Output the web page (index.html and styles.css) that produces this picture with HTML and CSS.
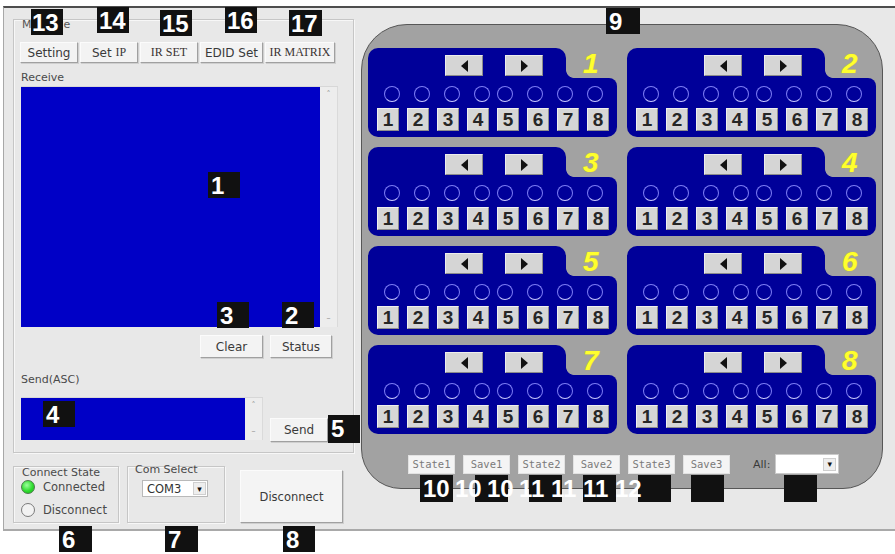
FILE: index.html
```html
<!DOCTYPE html>
<html>
<head>
<meta charset="utf-8">
<title>Matrix Control</title>
<link rel="stylesheet" href="styles.css">
</head>
<body>
<div class="window">
  <div class="left">
    <div class="group msg">
      <div class="legend">Message</div>
      <div class="tabs">
        <div class="btn w58">Setting</div>
        <div class="btn w58"><span>Set&nbsp;</span><span class="serif">IP</span></div>
        <div class="btn w58 serif">IR SET</div>
        <div class="btn w63">EDID Set</div>
        <div class="btn w70 serif">IR MATRIX</div>
      </div>
      <div class="lbl">Receive</div>
      <div class="textbox receive">
        <div class="blue"></div>
        <div class="sb"><span>&#x02C4;</span><span>&#x2013;</span></div>
      </div>
      <div class="row-cs">
        <div class="btn w63 h23">Clear</div>
        <div class="btn w62 h23">Status</div>
      </div>
      <div class="lbl lbl-send">Send(ASC)</div>
      <div class="send-row">
        <div class="textbox send">
          <div class="blue"></div>
          <div class="sb"><span>&#x02C4;</span><span>&#x2013;</span></div>
        </div>
        <div class="btn send-btn">Send</div>
      </div>
    </div>
    <div class="bottom">
      <div class="group cstate">
        <div class="glabel">Connect State</div>
        <div class="radio r1"><i class="dot on"></i><span>Connected</span></div>
        <div class="radio r2"><i class="dot"></i><span>Disconnect</span></div>
      </div>
      <div class="group com">
        <div class="glabel">Com Select</div>
        <div class="combo"><span class="val">COM3</span><span class="dd">&#x25BE;</span></div>
      </div>
      <div class="btn disc">Disconnect</div>
    </div>
  </div>

  <div class="panel">
    <div class="cards">
      <div class="card"><div class="ctop"><div class="tab"><div class="arrow"><i class="tri-l"></i></div><div class="arrow"><i class="tri-r"></i></div></div><div class="num">1</div></div><div class="cbody"><div class="leds"><i></i><i></i><i></i><i></i><i></i><i></i><i></i><i></i></div><div class="keys"><b>1</b><b>2</b><b>3</b><b>4</b><b>5</b><b>6</b><b>7</b><b>8</b></div></div></div>
      <div class="card"><div class="ctop"><div class="tab"><div class="arrow"><i class="tri-l"></i></div><div class="arrow"><i class="tri-r"></i></div></div><div class="num">2</div></div><div class="cbody"><div class="leds"><i></i><i></i><i></i><i></i><i></i><i></i><i></i><i></i></div><div class="keys"><b>1</b><b>2</b><b>3</b><b>4</b><b>5</b><b>6</b><b>7</b><b>8</b></div></div></div>
      <div class="card"><div class="ctop"><div class="tab"><div class="arrow"><i class="tri-l"></i></div><div class="arrow"><i class="tri-r"></i></div></div><div class="num">3</div></div><div class="cbody"><div class="leds"><i></i><i></i><i></i><i></i><i></i><i></i><i></i><i></i></div><div class="keys"><b>1</b><b>2</b><b>3</b><b>4</b><b>5</b><b>6</b><b>7</b><b>8</b></div></div></div>
      <div class="card"><div class="ctop"><div class="tab"><div class="arrow"><i class="tri-l"></i></div><div class="arrow"><i class="tri-r"></i></div></div><div class="num">4</div></div><div class="cbody"><div class="leds"><i></i><i></i><i></i><i></i><i></i><i></i><i></i><i></i></div><div class="keys"><b>1</b><b>2</b><b>3</b><b>4</b><b>5</b><b>6</b><b>7</b><b>8</b></div></div></div>
      <div class="card"><div class="ctop"><div class="tab"><div class="arrow"><i class="tri-l"></i></div><div class="arrow"><i class="tri-r"></i></div></div><div class="num">5</div></div><div class="cbody"><div class="leds"><i></i><i></i><i></i><i></i><i></i><i></i><i></i><i></i></div><div class="keys"><b>1</b><b>2</b><b>3</b><b>4</b><b>5</b><b>6</b><b>7</b><b>8</b></div></div></div>
      <div class="card"><div class="ctop"><div class="tab"><div class="arrow"><i class="tri-l"></i></div><div class="arrow"><i class="tri-r"></i></div></div><div class="num">6</div></div><div class="cbody"><div class="leds"><i></i><i></i><i></i><i></i><i></i><i></i><i></i><i></i></div><div class="keys"><b>1</b><b>2</b><b>3</b><b>4</b><b>5</b><b>6</b><b>7</b><b>8</b></div></div></div>
      <div class="card"><div class="ctop"><div class="tab"><div class="arrow"><i class="tri-l"></i></div><div class="arrow"><i class="tri-r"></i></div></div><div class="num">7</div></div><div class="cbody"><div class="leds"><i></i><i></i><i></i><i></i><i></i><i></i><i></i><i></i></div><div class="keys"><b>1</b><b>2</b><b>3</b><b>4</b><b>5</b><b>6</b><b>7</b><b>8</b></div></div></div>
      <div class="card"><div class="ctop"><div class="tab"><div class="arrow"><i class="tri-l"></i></div><div class="arrow"><i class="tri-r"></i></div></div><div class="num">8</div></div><div class="cbody"><div class="leds"><i></i><i></i><i></i><i></i><i></i><i></i><i></i><i></i></div><div class="keys"><b>1</b><b>2</b><b>3</b><b>4</b><b>5</b><b>6</b><b>7</b><b>8</b></div></div></div>
    </div>
    <div class="states">
      <div class="sbtn">State1</div>
      <div class="sbtn">Save1</div>
      <div class="sbtn">State2</div>
      <div class="sbtn">Save2</div>
      <div class="sbtn">State3</div>
      <div class="sbtn">Save3</div>
      <span class="all">All:</span>
      <div class="alldd"><span class="dd">&#x25BE;</span></div>
    </div>
  </div>
</div>

<div class="tag t13">13</div>
<div class="tag t14">14</div>
<div class="tag t15">15</div>
<div class="tag t16">16</div>
<div class="tag t17">17</div>
<div class="tag t9">9</div>
<div class="tag t1">1</div>
<div class="tag t3">3</div>
<div class="tag t2">2</div>
<div class="tag t4">4</div>
<div class="tag t5">5</div>
<div class="tag t6">6</div>
<div class="tag t7">7</div>
<div class="tag t8">8</div>
<div class="tag b1"></div>
<div class="tag b2"></div>
<div class="tag b3"></div>
<div class="tag b4"></div>
<div class="tag b5"></div>
<div class="tag b6"></div>
<div class="tag b7"></div>
<div class="wlabels"><span>10</span><span>10</span><span>10</span><span>11</span><span>11</span><span>11</span><span>12</span></div>
</body>
</html>
```

FILE: styles.css
```css
* { box-sizing: border-box; }

body {
  margin: 0;
  width: 895px;
  height: 554px;
  overflow: hidden;
  position: relative;
  background: #ffffff;
  font-family: "DejaVu Sans", "Liberation Sans", sans-serif;
  color: #3c3c3c;
}

.window {
  margin: 6px 0 0 3px;
  height: 525px;
  border-top: 2px solid #4d4d4d;
  border-left: 1px solid #a8a8a8;
  border-bottom: 2px solid #a9a9a9;
  background: #e8e8e8;
  display: flex;
  align-items: flex-start;
  padding-left: 9px;
}

.left {
  width: 341px;
  display: flex;
  flex-direction: column;
}

.group {
  border: 1px solid #c6c6c6;
  box-shadow: inset 1px 1px 0 #f7f7f7, 1px 1px 0 #f7f7f7;
}

.msg {
  margin-top: 11px;
  height: 434px;
  display: flex;
  flex-direction: column;
}

.legend {
  font-size: 11px;
  line-height: 12px;
  margin-top: -1px;
  padding-left: 8px;
  color: #555;
}

.serif { font-family: "Liberation Serif", serif; }

.btn {
  display: flex;
  align-items: center;
  justify-content: center;
  background: #f3f3f3;
  border: 1px solid;
  border-color: #fbfbfb #a0a0a0 #a0a0a0 #fbfbfb;
  box-shadow: 1px 1px 0 #cfcfcf;
  font-size: 12px;
  color: #3a3a3a;
  white-space: nowrap;
}

.tabs {
  display: flex;
  gap: 2px;
  margin-top: 11px;
  padding-left: 6px;
  height: 21px;
}
.tabs .btn { height: 21px; }
.tabs .btn.serif { font-size: 12px; color: #3a3232; }
.w58 { width: 58px; }
.w62 { width: 62px; }
.w63 { width: 63px; }
.w70 { width: 70px; }
.h23 { height: 23px; }

.lbl {
  font-size: 11px;
  line-height: 12px;
  margin-top: 9px;
  padding-left: 7px;
  color: #4a4a4a;
}
.lbl-send { margin-top: 16px; }

.textbox {
  display: flex;
  margin-left: 7px;
  border-top: 1px solid #d7d7d7;
}
.textbox .blue { flex: 1; background: #0000c6; }
.textbox .sb {
  width: 18px;
  background: #ededed;
  border-right: 1px solid #dadada;
  display: flex;
  flex-direction: column;
  justify-content: space-between;
  align-items: center;
  font-size: 8px;
  line-height: 10px;
  color: #9a9a9a;
  padding: 3px 0;
}
.receive { margin-top: 2px; height: 241px; width: 317px; }

.row-cs {
  display: flex;
  gap: 7px;
  margin-top: 8px;
  padding-left: 186px;
}

.send-row {
  display: flex;
  margin-top: 11px;
}
.send { height: 43px; width: 242px; }
.send-btn {
  width: 58px;
  height: 24px;
  margin: 21px 0 0 7px;
}

.bottom {
  display: flex;
  align-items: flex-start;
  margin-top: 13px;
}

.glabel {
  font-size: 11px;
  line-height: 12px;
  padding-left: 8px;
  color: #4a4a4a;
}

.cstate { width: 106px; height: 57px; }
.com { width: 98px; height: 57px; margin-left: 8px; }
.com .glabel { padding-left: 7px; margin-top: -3px; }

.radio {
  display: flex;
  align-items: center;
  gap: 8px;
  height: 16px;
  padding-left: 7px;
  font-size: 11.5px;
  color: #4a4a4a;
}
.r2 { margin-top: 7px; }
.dot {
  width: 14px;
  height: 14px;
  border-radius: 50%;
  border: 1px solid #7a7a7a;
  background: #f2f2f2;
}
.dot.on {
  border-color: #4a7a4a;
  background: radial-gradient(circle at 40% 35%, #9dff9d 0, #2fdc2f 55%, #19b419 100%);
}

.combo {
  display: flex;
  align-items: center;
  width: 66px;
  height: 17px;
  margin: 4px 0 0 14px;
  background: #ffffff;
  border: 1px solid #b9b9b9;
  font-size: 11.5px;
  color: #333;
}
.combo .val { flex: 1; padding-left: 4px; }
.dd {
  width: 13px;
  height: 13px;
  margin-right: 1px;
  background: #eeeeee;
  border: 1px solid #cfcfcf;
  display: flex;
  align-items: center;
  justify-content: center;
  font-size: 9px;
  color: #111;
}

.disc {
  width: 103px;
  height: 53px;
  margin: 4px 0 0 15px;
  font-size: 11.5px;
  background: #f4f4f4;
}

/* right panel */
.panel {
  margin: 16px 0 0 7px;
  width: 522px;
  height: 465px;
  border: 1px solid #575757;
  border-radius: 46px 46px 40px 40px;
  background: #a2a2a2;
  padding: 23px 6px 0;
}

.cards {
  display: grid;
  grid-template-columns: 249px 249px;
  grid-auto-rows: 89px;
  gap: 10px;
}

.card {
  display: flex;
  flex-direction: column;
}
.ctop { display: flex; height: 30px; }
.tab {
  width: 198px;
  background: #000099;
  border-radius: 10px 10px 0 0;
  display: flex;
  gap: 22px;
  padding: 7px 0 0 77px;
}
.arrow {
  width: 38px;
  height: 21px;
  background: #d5d5d5;
  border: 1px solid;
  border-color: #ececec #8c8c8c #8c8c8c #ececec;
  display: flex;
  align-items: center;
  justify-content: center;
}
.tri-l, .tri-r {
  width: 0;
  height: 0;
  border-top: 6px solid transparent;
  border-bottom: 6px solid transparent;
}
.tri-l { border-right: 7px solid #111; }
.tri-r { border-left: 7px solid #111; }

.num {
  flex: 1;
  position: relative;
  padding-left: 17px;
  font-family: "Liberation Sans", Arial, sans-serif;
  font-weight: bold;
  font-style: italic;
  font-size: 28px;
  line-height: 31px;
  color: #ffff2e;
  text-shadow: 0 0 1px #cccc00;
}
.num::after {
  content: "";
  position: absolute;
  left: 0;
  bottom: 0;
  width: 8px;
  height: 8px;
  background: radial-gradient(circle at 100% 0, transparent 7.5px, #000099 8.2px);
}

.cbody {
  flex: 1;
  background: #000099;
  border-radius: 0 8px 10px 10px;
  padding-top: 8px;
}
.leds {
  display: flex;
  gap: 14px;
  padding-left: 16px;
  height: 16px;
}
.leds i {
  width: 16px;
  height: 16px;
  border-radius: 50%;
  border: 1px solid;
  border-color: #7d7df5 #7d7df5 #c9c9ff #7d7df5;
}
.leds i:nth-child(5) { margin-left: -7px; }

.keys {
  display: flex;
  gap: 8px;
  padding-left: 9px;
  margin-top: 6px;
}
.keys b {
  width: 22px;
  height: 23px;
  background: #d6d6d6;
  border: 1px solid;
  border-color: #efefef #8e8e8e #8e8e8e #efefef;
  display: flex;
  align-items: center;
  justify-content: center;
  font-family: "Liberation Sans", Arial, sans-serif;
  font-size: 19px;
  font-weight: bold;
  color: #262626;
  line-height: 1;
}

.states {
  display: flex;
  align-items: center;
  gap: 8px;
  margin: 20px 0 0 40px;
}
.sbtn {
  width: 47px;
  height: 19px;
  background: #f4f4f4;
  border: 1px solid #e2e2e2;
  display: flex;
  align-items: center;
  justify-content: center;
  font-family: "DejaVu Sans Mono", monospace;
  font-size: 10.5px;
  color: #7a7a7a;
}
.all {
  margin-left: 15px;
  font-size: 11px;
  color: #3a3a3a;
}
.alldd {
  margin-left: -3px;
  width: 64px;
  height: 20px;
  background: #ffffff;
  border: 1px solid #cacaca;
  display: flex;
  align-items: center;
  justify-content: flex-end;
}
.alldd .dd { margin-right: 2px; }

/* annotation tags laid over the screenshot */
.tag {
  position: absolute;
  width: 32px;
  height: 26px;
  background: #111111;
  color: #ffffff;
  font-family: "Liberation Sans", Arial, sans-serif;
  font-weight: bold;
  font-size: 24px;
  line-height: 27px;
  padding-left: 3px;
}
.t13 { left: 31px; top: 9px; padding-left: 1px; }
.t14 { left: 97px; top: 7px; padding-left: 2px; }
.t15 { left: 160px; top: 10px; padding-left: 2px; }
.t16 { left: 225px; top: 7px; padding-left: 2px; }
.t17 { left: 289px; top: 10px; padding-left: 2px; width: 33px; }
.t9 { left: 606px; top: 8px; width: 34px; }
.t1 { left: 208px; top: 172px; }
.t3 { left: 217px; top: 302px; }
.t2 { left: 282px; top: 302px; }
.t4 { left: 43px; top: 401px; }
.t5 { left: 328px; top: 415px; height: 28px; }
.t6 { left: 59px; top: 526px; width: 33px; }
.t7 { left: 165px; top: 526px; width: 33px; }
.t8 { left: 283px; top: 526px; }
.b1, .b2, .b3, .b4, .b5, .b6, .b7 { top: 475px; width: 33px; height: 27px; }
.b1 { left: 420px; }
.b2 { left: 475px; }
.b3 { left: 529px; }
.b4 { left: 583px; }
.b5 { left: 638px; }
.b6 { left: 691px; }
.b7 { left: 784px; }

.wlabels {
  position: absolute;
  left: 423px;
  top: 475px;
  display: flex;
  font-family: "Liberation Sans", Arial, sans-serif;
  font-weight: bold;
  font-size: 24px;
  line-height: 27px;
  color: #ffffff;
}
.wlabels span { width: 32px; }
```
